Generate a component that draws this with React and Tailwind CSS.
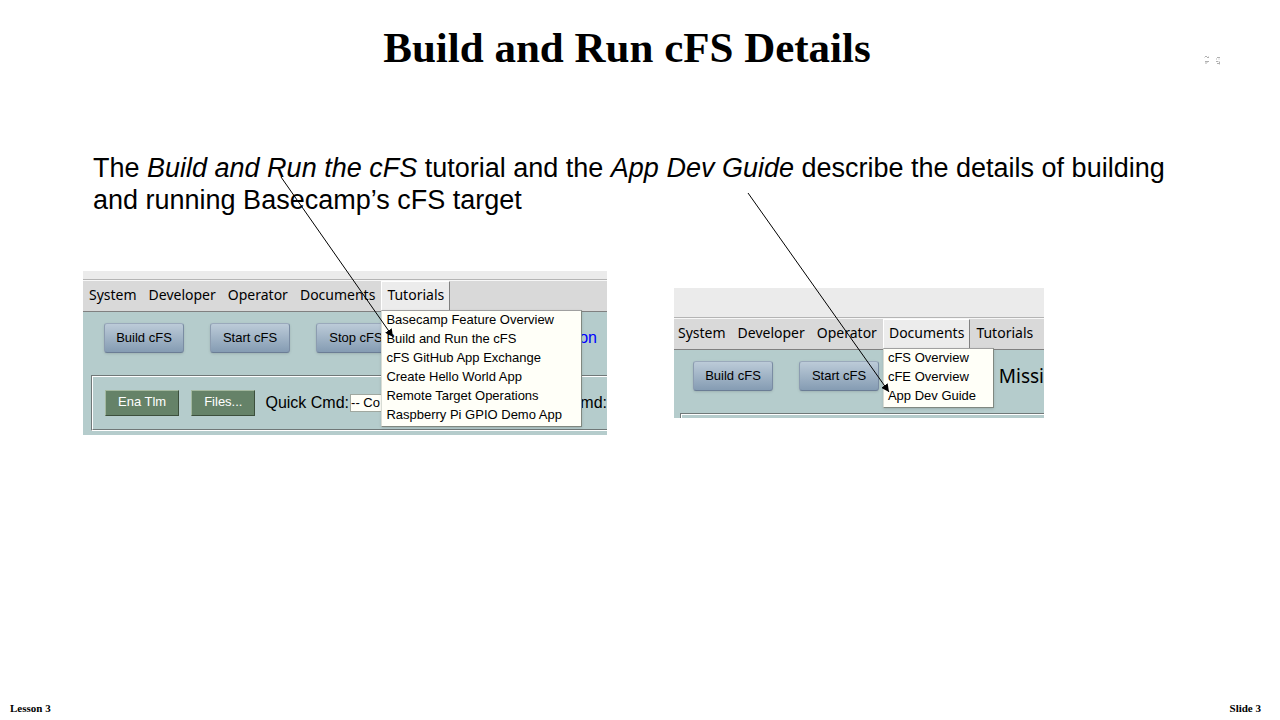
import React from 'react';

function MenuBar({ items, open, entries, menuWidth }) {
  return (
    <nav className="flex h-[32px] border-y border-t-[#f7f7f7] border-b-[#808080] bg-[#d9d9d9] font-['Noto_Sans',sans-serif] text-[14px]">
      {items.map((item) => (
        <div key={item} className="relative shrink-0">
          <button
            type="button"
            className={
              item === open
                ? 'h-[30px] border border-t-white border-l-white border-r-[#808080] border-b-[#808080] bg-[#ececec] px-[5px] pb-[3px] leading-[24px]'
                : 'h-[30px] border border-transparent px-[5px] pb-[3px] leading-[24px]'
            }
          >
            {item}
          </button>
          {item === open && (
            <ul
              className={`absolute top-[29px] left-0 z-10 border border-t-[#a0a0a0] border-l-[#d8dcd4] border-r-[#808880] border-b-[#808880] bg-[#fffff8] pb-px pl-1 font-['Liberation_Sans',sans-serif] text-[13px] leading-[17px] whitespace-nowrap shadow-sm ${menuWidth}`}
            >
              {entries.map((entry) => (
                <li key={entry}>
                  <button type="button" className="block pb-[2px]">{entry}</button>
                </li>
              ))}
            </ul>
          )}
        </div>
      ))}
    </nav>
  );
}

function RunButton({ children }) {
  return (
    <button
      type="button"
      className="h-[30px] w-[80px] shrink-0 rounded-[3px] border border-t-[#9aa9bb] border-r-[#7a8ca3] border-b-[#6b7d95] border-l-[#8c9cb0] bg-linear-to-b from-[#bccbd8] to-[#859cb3] text-[13px] leading-[26px] whitespace-nowrap shadow-sm"
    >
      {children}
    </button>
  );
}

function GreenButton({ children }) {
  return (
    <button
      type="button"
      className="h-[26px] shrink-0 border border-t-[#a3b8a0] border-r-[#3c4f3c] border-b-[#3c4f3c] border-l-[#a3b8a0] bg-[#658268] px-[12px] pb-[2px] text-[13px] leading-[22px] text-white"
    >
      {children}
    </button>
  );
}

function TutorialsWindow() {
  return (
    <section className="flex h-[164px] w-[524px] shrink-0 flex-col overflow-hidden bg-[#b5cccc]">
      <div className="h-[9px] shrink-0 border-b border-[#b4b4b4] bg-[#ebebeb]" />
      <MenuBar
        items={['System', 'Developer', 'Operator', 'Documents', 'Tutorials']}
        open="Tutorials"
        menuWidth="w-[201px]"
        entries={[
          'Basecamp Feature Overview',
          'Build and Run the cFS',
          'cFS GitHub App Exchange',
          'Create Hello World App',
          'Remote Target Operations',
          'Raspberry Pi GPIO Demo App',
        ]}
      />
      <div className="flex items-center gap-[26px] pt-[11px] pr-[10px] pl-[21px]">
        <RunButton>Build cFS</RunButton>
        <RunButton>Start cFS</RunButton>
        <RunButton>Stop cFS</RunButton>
        <span className="ml-auto text-[16px] leading-[30px] text-[#0000ff]">on</span>
      </div>
      <div className="mt-[22px] ml-2 border-t border-b border-l border-t-[#707878] border-b-white border-l-[#707878]">
        <div className="flex h-[54px] items-center border-t border-b border-l border-t-white border-b-[#707878] border-l-white pl-[12px]">
          <GreenButton>Ena Tlm</GreenButton>
          <span className="w-3 shrink-0" />
          <GreenButton>Files...</GreenButton>
          <label htmlFor="quick-cmd" className="ml-[10px] shrink-0 text-[16px]">Quick Cmd:</label>
          <input
            id="quick-cmd"
            defaultValue="-- Co"
            className="ml-px h-[18px] w-[60px] shrink-0 border border-[#a0a8a0] bg-[#fffff8] pb-px text-[13px]"
          />
          <span className="ml-auto text-[16px]">md:</span>
        </div>
      </div>
    </section>
  );
}

function DocumentsWindow() {
  return (
    <section className="flex h-[130px] w-[370px] shrink-0 flex-col overflow-hidden bg-[#b5cccc]">
      <div className="h-[30px] shrink-0 border-b border-[#b4b4b4] bg-[#ebebeb]" />
      <div className="-ml-[2px]">
        <MenuBar
          items={['System', 'Developer', 'Operator', 'Documents', 'Tutorials']}
          open="Documents"
          menuWidth="w-[111px]"
          entries={['cFS Overview', 'cFE Overview', 'App Dev Guide']}
        />
      </div>
      <div className="flex items-center gap-[26px] pt-[11px] pl-[19px]">
        <RunButton>Build cFS</RunButton>
        <RunButton>Start cFS</RunButton>
        <span className="ml-auto font-['Noto_Sans',sans-serif] text-[19px] leading-[30px]">Missi</span>
      </div>
      <div className="mt-[22px] ml-[6px] border-t border-l border-[#707878]">
        <div className="h-[6px] border-t border-l border-white" />
      </div>
    </section>
  );
}

export default function App() {
  return (
    <div className="relative flex min-h-screen flex-col bg-white font-['Liberation_Sans',sans-serif] text-black">
      <header className="flex items-center pt-[22px]">
        <h1 className="flex-1 pl-[52px] text-center font-['Liberation_Serif',serif] text-[43px] leading-[52px] font-bold">
          Build and Run cFS Details
        </h1>
        <svg className="mt-6 mr-[58px] h-3 w-5" viewBox="0 0 20 12" fill="none" stroke="#b0b0b0" aria-hidden="true">
          <path d="M3 2.5h2M5 3.5h2M15 3.5h3M14 5h1M3 7.5h4M3 9h2M14 7.5h2M17 8.5h1M15 9.5h3" />
          <path d="M2 3.5h1M6 2.5h1M16 5h2M5 8.5h1M16 7.5h2M17 10.5h1" stroke="#dedede" />
        </svg>
      </header>
      <main className="flex-1 pl-[83px]">
        <p className="mt-[78px] mr-[100px] ml-[10px] text-[27px] leading-[32px]">
          The <em>Build and Run the cFS</em> tutorial and the <em>App Dev Guide</em> describe the details of building
          and running Basecamp’s cFS target
        </p>
        <div className="mt-[55px] flex items-end gap-[67px]">
          <TutorialsWindow />
          <div className="pb-[17px]">
            <DocumentsWindow />
          </div>
        </div>
      </main>
      <footer className="flex justify-between pr-[19px] pb-1 pl-[10px] font-['Liberation_Serif',serif] text-[11px] leading-[16px] font-bold">
        <span>Lesson 3</span>
        <span>Slide 3</span>
      </footer>
      <svg className="pointer-events-none absolute top-0 left-0 z-20 h-[720px] w-[1280px]" viewBox="0 0 1280 720" aria-hidden="true">
        <defs>
          <marker id="head" markerWidth="9" markerHeight="8" refX="8" refY="4" orient="auto" markerUnits="userSpaceOnUse">
            <path d="M0 0L8 4L0 8Z" />
          </marker>
        </defs>
        <path d="M281 177L393 337" stroke="#000" markerEnd="url(#head)" />
        <path d="M748 193L889 392" stroke="#000" markerEnd="url(#head)" />
      </svg>
    </div>
  );
}
